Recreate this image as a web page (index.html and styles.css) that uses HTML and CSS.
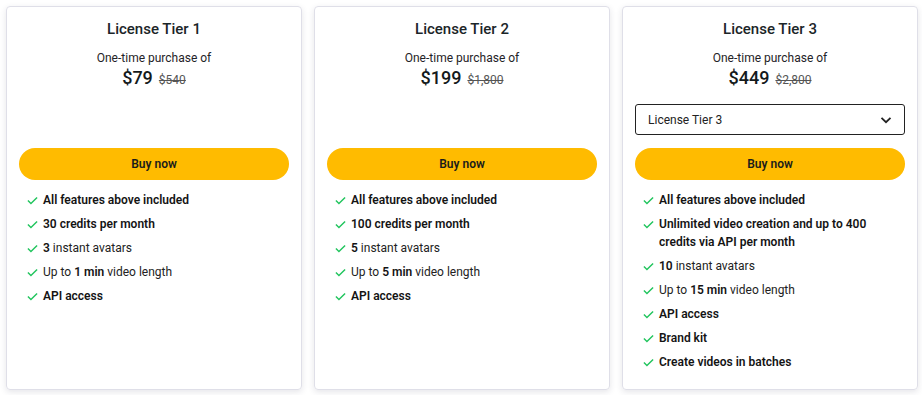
FILE: index.html
```html
<!DOCTYPE html>
<html lang="en">
<head>
    <meta charset="UTF-8">
    <meta name="viewport" content="width=device-width, initial-scale=1.0">
    <title>License Tiers</title>
    <link rel="stylesheet" href="styles.css">
</head>
<body>
    <div class="tiers">
        <div class="tier-card">
            <h2 class="tier-title">License Tier 1</h2>
            <div class="tier-sub">One-time purchase of</div>
            <div class="tier-price"><span class="now">$79</span><s class="was">$540</s></div>
            <div class="tier-select-space"></div>
            <button class="buy-btn">Buy now</button>
            <ul class="features">
                <li><svg class="check" viewBox="0 0 12 9"><path d="M1 4.6l3.3 3.2L11 1.2"/></svg><span><b>All features above included</b></span></li>
                <li><svg class="check" viewBox="0 0 12 9"><path d="M1 4.6l3.3 3.2L11 1.2"/></svg><span><b>30 credits per month</b></span></li>
                <li><svg class="check" viewBox="0 0 12 9"><path d="M1 4.6l3.3 3.2L11 1.2"/></svg><span><b>3</b> instant avatars</span></li>
                <li><svg class="check" viewBox="0 0 12 9"><path d="M1 4.6l3.3 3.2L11 1.2"/></svg><span>Up to <b>1 min</b> video length</span></li>
                <li><svg class="check" viewBox="0 0 12 9"><path d="M1 4.6l3.3 3.2L11 1.2"/></svg><span><b>API access</b></span></li>
            </ul>
        </div>

        <div class="tier-card">
            <h2 class="tier-title">License Tier 2</h2>
            <div class="tier-sub">One-time purchase of</div>
            <div class="tier-price"><span class="now">$199</span><s class="was">$1,800</s></div>
            <div class="tier-select-space"></div>
            <button class="buy-btn">Buy now</button>
            <ul class="features">
                <li><svg class="check" viewBox="0 0 12 9"><path d="M1 4.6l3.3 3.2L11 1.2"/></svg><span><b>All features above included</b></span></li>
                <li><svg class="check" viewBox="0 0 12 9"><path d="M1 4.6l3.3 3.2L11 1.2"/></svg><span><b>100 credits per month</b></span></li>
                <li><svg class="check" viewBox="0 0 12 9"><path d="M1 4.6l3.3 3.2L11 1.2"/></svg><span><b>5</b> instant avatars</span></li>
                <li><svg class="check" viewBox="0 0 12 9"><path d="M1 4.6l3.3 3.2L11 1.2"/></svg><span>Up to <b>5 min</b> video length</span></li>
                <li><svg class="check" viewBox="0 0 12 9"><path d="M1 4.6l3.3 3.2L11 1.2"/></svg><span><b>API access</b></span></li>
            </ul>
        </div>

        <div class="tier-card">
            <h2 class="tier-title">License Tier 3</h2>
            <div class="tier-sub">One-time purchase of</div>
            <div class="tier-price"><span class="now">$449</span><s class="was">$2,800</s></div>
            <div class="tier-select">
                <span>License Tier 3</span>
                <svg class="chevron" viewBox="0 0 12 8"><path d="M1.5 1.8L6 6.2l4.5-4.4"/></svg>
            </div>
            <button class="buy-btn">Buy now</button>
            <ul class="features">
                <li><svg class="check" viewBox="0 0 12 9"><path d="M1 4.6l3.3 3.2L11 1.2"/></svg><span><b>All features above included</b></span></li>
                <li><svg class="check" viewBox="0 0 12 9"><path d="M1 4.6l3.3 3.2L11 1.2"/></svg><span><b>Unlimited video creation and up to 400 credits via API per month</b></span></li>
                <li><svg class="check" viewBox="0 0 12 9"><path d="M1 4.6l3.3 3.2L11 1.2"/></svg><span><b>10</b> instant avatars</span></li>
                <li><svg class="check" viewBox="0 0 12 9"><path d="M1 4.6l3.3 3.2L11 1.2"/></svg><span>Up to <b>15 min</b> video length</span></li>
                <li><svg class="check" viewBox="0 0 12 9"><path d="M1 4.6l3.3 3.2L11 1.2"/></svg><span><b>API access</b></span></li>
                <li><svg class="check" viewBox="0 0 12 9"><path d="M1 4.6l3.3 3.2L11 1.2"/></svg><span><b>Brand kit</b></span></li>
                <li><svg class="check" viewBox="0 0 12 9"><path d="M1 4.6l3.3 3.2L11 1.2"/></svg><span><b>Create videos in batches</b></span></li>
            </ul>
        </div>
    </div>
</body>
</html>
```

FILE: styles.css
```css
body {
    margin: 0;
    padding: 6px 4px 6px 6px;
    font-family: Roboto, 'Liberation Sans', sans-serif;
    background-color: #fff;
    color: #1f2327;
}
.tiers {
    display: grid;
    grid-template-columns: repeat(3, 296px);
    gap: 12px;
}
.tier-card {
    border: 1px solid #dfdfe8;
    border-radius: 4px;
    box-shadow: 0 2px 6px rgba(40, 40, 70, 0.12);
    padding: 13px 12px 18px 12px;
    height: 351px;
}
.tier-title {
    margin: 0;
    font-size: 15px;
    line-height: 18px;
    font-weight: 500;
    text-align: center;
    color: #1b2528;
}
.tier-sub {
    margin-top: 12px;
    font-size: 12px;
    line-height: 16px;
    text-align: center;
    color: #1f2327;
}
.tier-price {
    display: flex;
    justify-content: center;
    align-items: baseline;
    gap: 6px;
    margin-top: 1px;
    line-height: 22px;
}
.tier-price .now {
    font-size: 18px;
    font-weight: 500;
    color: #141a1c;
}
.tier-price .was {
    font-size: 12px;
    color: #555;
}
.tier-select-space,
.tier-select {
    margin-top: 13px;
    height: 31px;
    box-sizing: border-box;
}
.tier-select {
    border: 1px solid #222;
    border-radius: 3px;
    display: flex;
    align-items: center;
    justify-content: space-between;
    padding: 0 12px 0 12px;
    font-size: 12px;
    color: #222;
}
.chevron {
    width: 12px;
    height: 8px;
    fill: none;
    stroke: #222;
    stroke-width: 1.8;
}
.buy-btn {
    display: block;
    width: 100%;
    margin-top: 13px;
    height: 32px;
    border: none;
    border-radius: 16px;
    background-color: #ffbb00;
    font-family: inherit;
    font-size: 12px;
    font-weight: 600;
    color: #1b1b1b;
    cursor: pointer;
}
.features {
    list-style: none;
    margin: 11px 0 0 0;
    padding: 0 0 0 8px;
}
.features li {
    display: flex;
    align-items: flex-start;
    gap: 5px;
    font-size: 12px;
    line-height: 18px;
    margin-bottom: 6px;
    color: #222;
}
.features b {
    font-weight: 600;
    color: #141414;
}
.check {
    flex: none;
    width: 11px;
    height: 9px;
    margin-top: 5px;
    fill: none;
    stroke: #22c55e;
    stroke-width: 1.6;
}
```
